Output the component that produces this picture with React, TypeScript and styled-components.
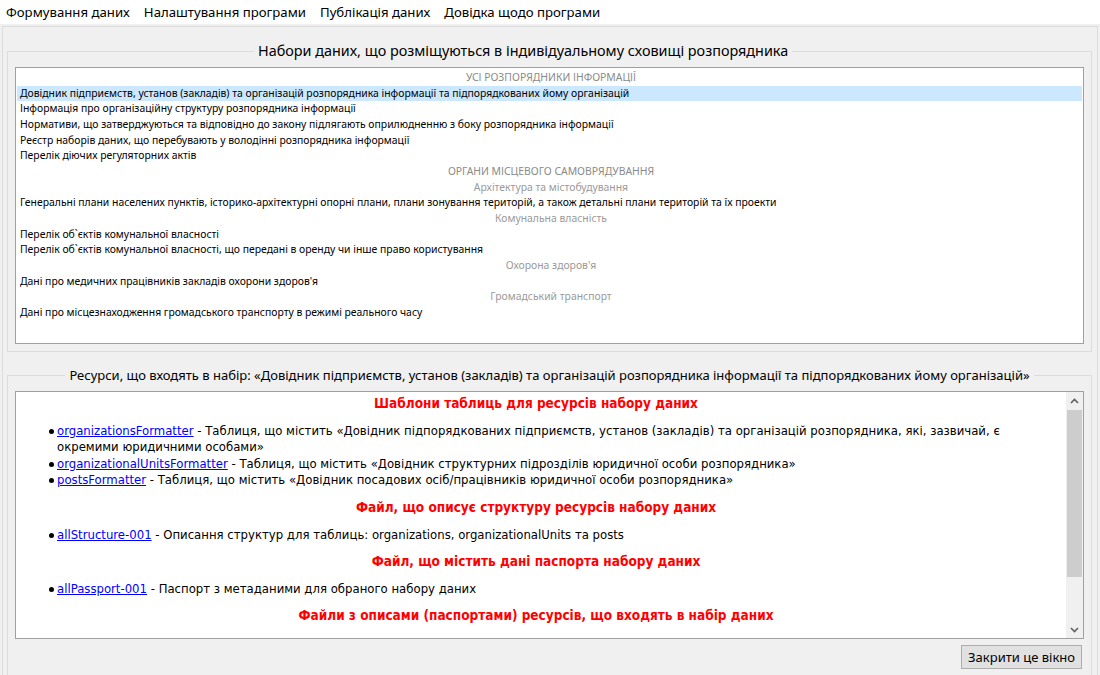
import React from "react";
import styled, { createGlobalStyle } from "styled-components";

const GlobalStyle = createGlobalStyle`
  html, body { margin: 0; padding: 0; height: 675px; overflow: hidden; background: #f0f0f0; }
  body { font-family: "Noto Sans", "Open Sans", sans-serif; color: #000; }
  * { box-sizing: border-box; }
`;

const Window = styled.div`
  display: flex;
  flex-direction: column;
  height: 675px;
`;

const MenuBar = styled.nav`
  display: flex;
  height: 24px;
  background: #fff;
  align-items: center;
`;

const MenuItem = styled.span`
  font-size: 13.2px;
  padding: 1px 7px 0 6px;
  margin-right: 1px;
  line-height: 23px;
  white-space: nowrap;
`;

const Panel = styled.div`
  flex: 1;
  margin: 2px 2px 0 2px;
  border: 1px solid #dcdcdc;
  border-bottom: none;
  padding: 15px 5px 0 4px;
  display: flex;
  flex-direction: column;
  min-height: 0;
`;

const GroupBox = styled.fieldset<{ $grow?: boolean }>`
  margin: 0;
  border: 1px solid #dcdcdc;
  padding: 7px 7px ${(p) => (p.$grow ? "40px" : "7px")} 7px;
  min-width: 0;
  & + & {
    margin-top: 14px;
  }
`;

const Legend = styled.legend<{ $left?: number; $size?: number }>`
  font-size: ${(p) => p.$size ?? 13}px;
  line-height: 18px;
  padding: 0 4px;
  white-space: nowrap;
  margin-left: ${(p) => (p.$left !== undefined ? `${p.$left}px` : "auto")};
  margin-right: auto;
`;

const ListBox = styled.div`
  height: 277px;
  background: #fff;
  border: 1px solid #a0a0a0;
  padding: 2px 1px 1px 1px;
  overflow: hidden;
`;

const Row = styled.div<{ $kind: "item" | "header" | "sub"; $selected?: boolean }>`
  height: 15.67px;
  line-height: 15.67px;
  font-size: 10.4px;
  white-space: nowrap;
  padding-left: 3px;
  text-align: ${(p) => (p.$kind === "item" ? "left" : "center")};
  color: ${(p) => (p.$kind === "header" ? "#8a8a8a" : p.$kind === "sub" ? "#9a9a9a" : "#000")};
  background: ${(p) => (p.$selected ? "#cce8ff" : "transparent")};
`;

const ContentBox = styled.div`
  display: flex;
  height: 248px;
  background: #fff;
  border: 1px solid #a0a0a0;
  overflow: hidden;
`;

const Doc = styled.div`
  flex: 1;
  min-width: 0;
  padding: 3px 10px 0 0;
  font-family: "DejaVu Sans Condensed", "DejaVu Sans", sans-serif;
  font-size: 13px;
  overflow: hidden;
`;

const Heading = styled.div`
  text-align: center;
  color: #ff0000;
  font-weight: bold;
  font-size: 13.5px;
  line-height: 17px;
`;

const BulletList = styled.ul`
  list-style: none;
  margin: 11px 0 10px 0;
  padding: 0 0 0 41px;
`;

const Bullet = styled.li`
  position: relative;
  line-height: 16.4px;
  &::before {
    content: "";
    position: absolute;
    left: -8px;
    top: 6px;
    width: 5px;
    height: 5px;
    border-radius: 50%;
    background: #000;
  }
`;

const Link = styled.a`
  color: #0000ff;
  text-decoration: underline;
`;

const ScrollBar = styled.div`
  width: 17px;
  display: flex;
  flex-direction: column;
  background: #f0f0f0;
`;

const ScrollArrow = styled.div`
  height: 17px;
  display: flex;
  align-items: center;
  justify-content: center;
`;

const Track = styled.div`
  flex: 1;
  display: flex;
  flex-direction: column;
  padding: 1px 1px 0 1px;
`;

const Thumb = styled.div`
  height: 167px;
  background: #cdcdcd;
`;

const ButtonRow = styled.div`
  display: flex;
  justify-content: flex-end;
  margin-top: 6px;
  padding-right: 2px;
`;

const Button = styled.button`
  height: 24px;
  padding: 0 6px;
  font-family: "Noto Sans", "Open Sans", sans-serif;
  font-size: 13px;
  background: #e1e1e1;
  border: 1px solid #adadad;
  color: #000;
  border-radius: 0;
`;

const Chevron = ({ up }: { up?: boolean }) => (
  <svg width="9" height="6" viewBox="0 0 9 6">
    <polyline
      points={up ? "1,5 4.5,1.5 8,5" : "1,1 4.5,4.5 8,1"}
      fill="none"
      stroke="#606060"
      strokeWidth="1.6"
    />
  </svg>
);

type RowData = { text: string; kind: "item" | "header" | "sub"; selected?: boolean };

const rows: RowData[] = [
  { text: "УСІ РОЗПОРЯДНИКИ ІНФОРМАЦІЇ", kind: "header" },
  {
    text: "Довідник підприємств, установ (закладів) та організацій розпорядника інформації та підпорядкованих йому організацій",
    kind: "item",
    selected: true,
  },
  { text: "Інформація про організаційну структуру розпорядника інформації", kind: "item" },
  {
    text: "Нормативи, що затверджуються та відповідно до закону підлягають оприлюдненню з боку розпорядника інформації",
    kind: "item",
  },
  { text: "Реєстр наборів даних, що перебувають у володінні розпорядника інформації", kind: "item" },
  { text: "Перелік діючих регуляторних актів", kind: "item" },
  { text: "ОРГАНИ МІСЦЕВОГО САМОВРЯДУВАННЯ", kind: "header" },
  { text: "Архітектура та містобудування", kind: "sub" },
  {
    text: "Генеральні плани населених пунктів, історико-архітектурні опорні плани, плани зонування територій, а також детальні плани територій та їх проекти",
    kind: "item",
  },
  { text: "Комунальна власність", kind: "sub" },
  { text: "Перелік об`єктів комунальної власності", kind: "item" },
  {
    text: "Перелік об`єктів комунальної власності, що передані в оренду чи інше право користування",
    kind: "item",
  },
  { text: "Охорона здоров'я", kind: "sub" },
  { text: "Дані про медичних працівників закладів охорони здоров'я", kind: "item" },
  { text: "Громадський транспорт", kind: "sub" },
  { text: "Дані про місцезнаходження громадського транспорту в режимі реального часу", kind: "item" },
];

type Section = { title: string; items: { link: string; text: string }[] };

const sections: Section[] = [
  {
    title: "Шаблони таблиць для ресурсів набору даних",
    items: [
      {
        link: "organizationsFormatter",
        text: " - Таблиця, що містить «Довідник підпорядкованих підприємств, установ (закладів) та організацій розпорядника, які, зазвичай, є окремими юридичними особами»",
      },
      {
        link: "organizationalUnitsFormatter",
        text: " - Таблиця, що містить «Довідник структурних підрозділів юридичної особи розпорядника»",
      },
      {
        link: "postsFormatter",
        text: " - Таблиця, що містить «Довідник посадових осіб/працівників юридичної особи розпорядника»",
      },
    ],
  },
  {
    title: "Файл, що описує структуру ресурсів набору даних",
    items: [
      {
        link: "allStructure-001",
        text: " - Описання структур для таблиць: organizations, organizationalUnits та posts",
      },
    ],
  },
  {
    title: "Файл, що містить дані паспорта набору даних",
    items: [{ link: "allPassport-001", text: " - Паспорт з метаданими для обраного набору даних" }],
  },
  {
    title: "Файли з описами (паспортами) ресурсів, що входять в набір даних",
    items: [],
  },
];

export default function App() {
  return (
    <>
      <GlobalStyle />
      <Window>
        <MenuBar>
          <MenuItem>Формування даних</MenuItem>
          <MenuItem>Налаштування програми</MenuItem>
          <MenuItem>Публікація даних</MenuItem>
          <MenuItem>Довідка щодо програми</MenuItem>
        </MenuBar>
        <Panel>
          <GroupBox>
            <Legend $left={239} $size={14.4}>
              Набори даних, що розміщуються в індивідуальному сховищі розпорядника
            </Legend>
            <ListBox>
              {rows.map((r, i) => (
                <Row key={i} $kind={r.kind} $selected={r.selected}>
                  {r.text}
                </Row>
              ))}
            </ListBox>
          </GroupBox>
          <GroupBox $grow>
            <Legend>
              Ресурси, що входять в набір: «Довідник підприємств, установ (закладів) та організацій розпорядника
              інформації та підпорядкованих йому організацій»
            </Legend>
            <ContentBox>
              <Doc>
                {sections.map((s, i) => (
                  <React.Fragment key={i}>
                    <Heading>{s.title}</Heading>
                    {s.items.length > 0 && (
                      <BulletList>
                        {s.items.map((it, j) => (
                          <Bullet key={j}>
                            <Link href="#">{it.link}</Link>
                            {it.text}
                          </Bullet>
                        ))}
                      </BulletList>
                    )}
                  </React.Fragment>
                ))}
              </Doc>
              <ScrollBar>
                <ScrollArrow>
                  <Chevron up />
                </ScrollArrow>
                <Track>
                  <Thumb />
                </Track>
                <ScrollArrow>
                  <Chevron />
                </ScrollArrow>
              </ScrollBar>
            </ContentBox>
            <ButtonRow>
              <Button>Закрити це вікно</Button>
            </ButtonRow>
          </GroupBox>
        </Panel>
      </Window>
    </>
  );
}
